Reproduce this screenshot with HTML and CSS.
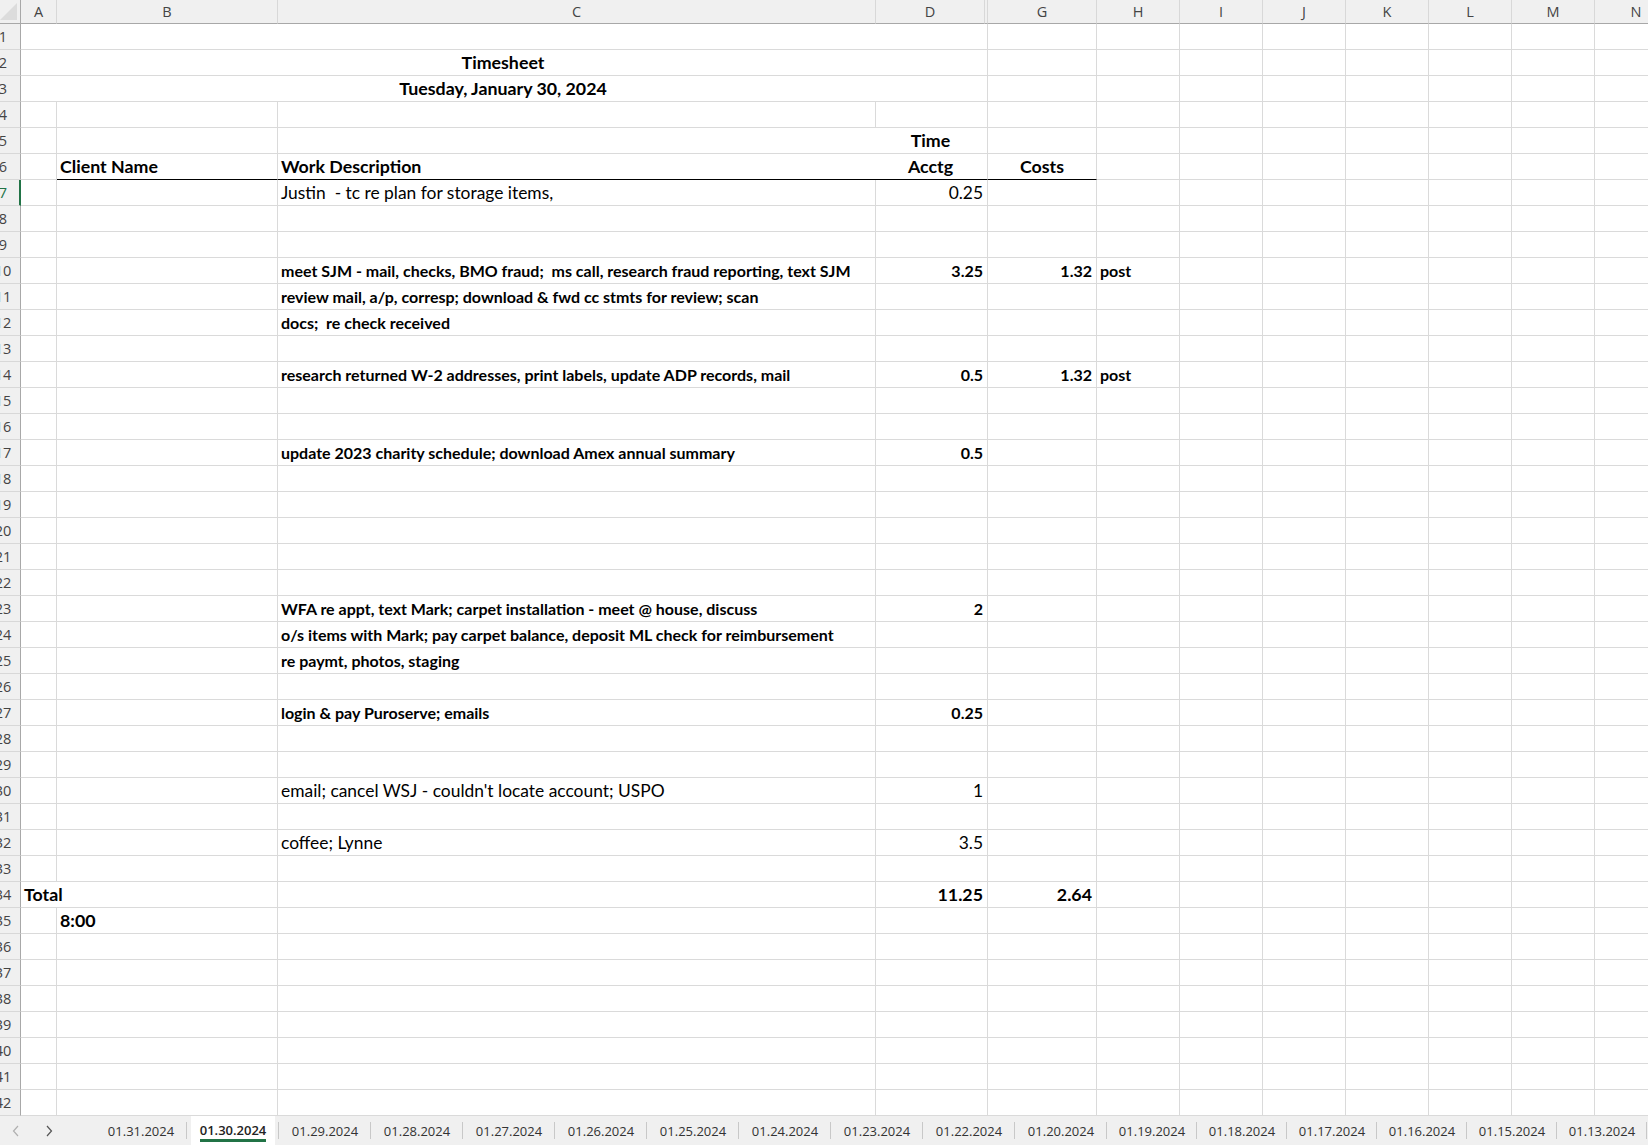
FILE: index.html
```html
<!DOCTYPE html>
<html lang="en">

<head>
  <meta charset="UTF-8" />
  <title>Timesheet - 01.30.2024</title>
  <link rel="stylesheet" href="styles.css">
</head>

<body>
  <div class="app">
    <div class="sheet" id="sheet"></div>

    <div class="tabs">
      <div class="nav">
        <svg class="arrow off" width="8" height="12" viewBox="0 0 8 12"><path d="M6 1 1.5 6 6 11" /></svg>
        <svg class="arrow" width="8" height="12" viewBox="0 0 8 12"><path d="M2 1 6.5 6 2 11" /></svg>
      </div>
      <div class="tab">01.31.2024</div>
      <div class="tab active"><span>01.30.2024</span></div>
      <div class="tab">01.29.2024</div>
      <div class="tab">01.28.2024</div>
      <div class="tab">01.27.2024</div>
      <div class="tab">01.26.2024</div>
      <div class="tab">01.25.2024</div>
      <div class="tab">01.24.2024</div>
      <div class="tab">01.23.2024</div>
      <div class="tab">01.22.2024</div>
      <div class="tab">01.20.2024</div>
      <div class="tab narrow">01.19.2024</div>
      <div class="tab narrow">01.18.2024</div>
      <div class="tab narrow">01.17.2024</div>
      <div class="tab narrow">01.16.2024</div>
      <div class="tab narrow">01.15.2024</div>
      <div class="tab narrow">01.13.2024</div>
    </div>
  </div>

  <script>
    const cols = ["A", "B", "C", "D", "EF", "G", "H", "I", "J", "K", "L", "M", "N"];
    const ROWS = 42;

    // cell contents, by row then column
    const data = {
      1: { A: { span: 4, cls: "nr" } },
      2: { A: { span: 4, cls: "nr b title", t: "Timesheet" } },
      3: { A: { span: 4, cls: "nr b title", t: "Tuesday, January 30, 2024" } },
      5: { C: { cls: "nr" }, D: { t: "Time", cls: "b ctr" } },
      6: {
        B: { t: "Client Name", cls: "b ul" },
        C: { t: "Work Description", cls: "b ul nr" },
        D: { t: "Acctg", cls: "b ctr ul" },
        EF: { cls: "ul" },
        G: { t: "Costs", cls: "b ctr ul" }
      },
      7: { C: { t: "Justin  - tc re plan for storage items," }, D: { t: "0.25", cls: "num" } },
      10: {
        C: { t: "meet SJM - mail, checks, BMO fraud;  ms call, research fraud reporting, text SJM", cls: "sm" },
        D: { t: "3.25", cls: "sm num" }, G: { t: "1.32", cls: "sm num" }, H: { t: "post", cls: "sm" }
      },
      11: { C: { t: "review mail, a/p, corresp; download & fwd cc stmts for review; scan", cls: "sm" } },
      12: { C: { t: "docs;  re check received", cls: "sm" } },
      14: {
        C: { t: "research returned W-2 addresses, print labels, update ADP records, mail", cls: "sm" },
        D: { t: "0.5", cls: "sm num" }, G: { t: "1.32", cls: "sm num" }, H: { t: "post", cls: "sm" }
      },
      17: {
        C: { t: "update 2023 charity schedule; download Amex annual summary", cls: "sm" },
        D: { t: "0.5", cls: "sm num" }
      },
      23: {
        C: { t: "WFA re appt, text Mark; carpet installation - meet @ house, discuss", cls: "sm" },
        D: { t: "2", cls: "sm num" }
      },
      24: { C: { t: "o/s items with Mark; pay carpet balance, deposit ML check for reimbursement", cls: "sm" } },
      25: { C: { t: "re paymt, photos, staging", cls: "sm" } },
      27: { C: { t: "login & pay Puroserve; emails", cls: "sm" }, D: { t: "0.25", cls: "sm num" } },
      30: { C: { t: "email; cancel WSJ - couldn't locate account; USPO" }, D: { t: "1", cls: "num" } },
      32: { C: { t: "coffee; Lynne" }, D: { t: "3.5", cls: "num" } },
      34: { A: { t: "Total", cls: "b nr" }, D: { t: "11.25", cls: "b num" }, G: { t: "2.64", cls: "b num" } },
      35: { B: { t: "8:00", cls: "b" } }
    };

    const sheet = document.getElementById("sheet");

    function add(cls, text) {
      const el = document.createElement("div");
      el.className = cls;
      if (text) el.textContent = text;
      sheet.appendChild(el);
      return el;
    }

    // column headers
    add("corner");
    cols.forEach(c => add("colhead" + (c === "EF" ? " hidden-col" : ""), c === "EF" ? "" : c));

    for (let r = 1; r <= ROWS; r++) {
      const head = add("rowhead" + (r === 7 ? " sel" : ""));
      head.innerHTML = "<span>" + r + "</span>";

      const row = data[r] || {};
      let skip = 0;
      cols.forEach(c => {
        if (skip > 0) { skip--; return; }
        const cell = row[c] || {};
        let cls = "cell col-" + c;
        if (cell.cls) cls += " " + cell.cls;
        const el = add(cls, cell.t);
        if (cell.span) {
          el.style.gridColumn = "span " + cell.span;
          skip = cell.span - 1;
        }
      });
    }
  </script>
</body>

</html>
```

FILE: styles.css
```css
body {
  margin: 0;
  background: #fff;
  overflow: hidden;
}

.app {
  width: 1648px;
  height: 1145px;
  display: flex;
  flex-direction: column;
  overflow: hidden;
}

.sheet {
  display: grid;
  grid-template-columns: 21px 36px 221px 598px 109px 3px 109px repeat(7, 83px);
  grid-template-rows: 24px repeat(42, 26px);
  flex: none;
}

.corner {
  background: #f0f0f0;
  border-right: 1px solid #a8a8a8;
  border-bottom: 1px solid #a8a8a8;
  display: flex;
  justify-content: flex-end;
  align-items: flex-end;
  padding: 0 3px 3px 0;
  overflow: hidden;
}

.corner::after {
  content: "";
  border-left: 17px solid transparent;
  border-bottom: 17px solid #dcdcdc;
}

.colhead {
  background: #f0f0f0;
  border-right: 1px solid #d8d8d8;
  border-bottom: 1px solid #a8a8a8;
  text-align: center;
  font-family: "Open Sans", sans-serif;
  font-size: 14.5px;
  line-height: 23px;
  color: #444;
  overflow: hidden;
}

.rowhead {
  background: #f0f0f0;
  border-right: 1px solid #a8a8a8;
  border-bottom: 1px solid #d8d8d8;
  font-family: "Open Sans", sans-serif;
  font-size: 14.5px;
  line-height: 25px;
  color: #444;
  overflow: hidden;
}

.rowhead span {
  display: block;
  width: 36px;
  margin-left: -15px;
  text-align: center;
}

.rowhead.sel {
  color: #217346;
  border-right: 2px solid #217346;
}

.cell {
  border-right: 1px solid #dadada;
  border-bottom: 1px solid #dadada;
  font-family: Lato, "Liberation Sans", sans-serif;
  font-size: 17.4px;
  line-height: 25px;
  color: #000;
  white-space: pre;
  padding: 0 3px;
}

.col-D {
  border-right: none;
}

.col-EF {
  padding: 0;
}

.cell.nr {
  border-right: none;
}

.cell.b {
  font-size: 17.8px;
  font-weight: bold;
}

.cell.sm {
  font-size: 16px;
  font-weight: bold;
  line-height: 26px;
}

.cell.title {
  text-align: center;
}

.cell.ctr {
  text-align: center;
}

.cell.num {
  text-align: right;
  padding-right: 2px;
}

.col-G.num {
  padding-right: 4px;
}

.cell.ul {
  border-bottom-color: #000;
}

/* sheet tabs */
.tabs {
  flex: 1;
  background: #f0f0f0;
  display: flex;
  align-items: stretch;
  font-family: "Open Sans", sans-serif;
  font-size: 13px;
  color: #333;
}

.nav {
  flex: 0 0 95px;
  display: flex;
  align-items: center;
  gap: 25px;
  padding-left: 12px;
  box-sizing: border-box;
}

.arrow path {
  fill: none;
  stroke: #555;
  stroke-width: 1.2;
}

.arrow.off path {
  stroke: #b0b0b0;
}

.tab {
  flex: 0 0 92px;
  display: flex;
  align-items: center;
  justify-content: center;
  background: linear-gradient(#c8c8c8, #c8c8c8) right center / 1px 17px no-repeat;
}

.tab.narrow {
  flex-basis: 90px;
}

.tab.active {
  background:
    linear-gradient(#c8c8c8, #c8c8c8) right center / 1px 17px no-repeat,
    linear-gradient(#fff, #fff) center / 84px 100% no-repeat;
  font-weight: 600;
  color: #222;
}

.tab.active span {
  border-bottom: 3px solid #217346;
  line-height: 17px;
  margin-top: 2px;
}
```
